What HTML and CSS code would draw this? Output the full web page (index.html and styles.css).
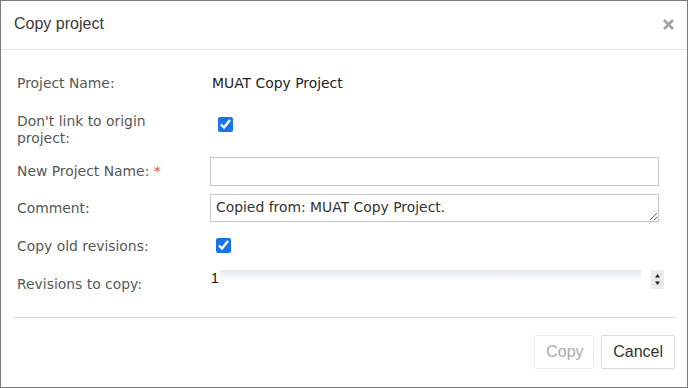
FILE: index.html
```html
<!DOCTYPE html>
<html>
<head>
<meta charset="utf-8">
<link rel="stylesheet" href="styles.css">
</head>
<body>
<div class="modal">
  <div class="modal-header">
    <span class="modal-title">Copy project</span>
    <span class="close" aria-label="Close">
      <svg width="11" height="11" viewBox="0 0 11 11"><path d="M1 1L10 10M10 1L1 10" stroke="#a2a2a2" stroke-width="2.6" stroke-linecap="butt"/></svg>
    </span>
  </div>
  <div class="modal-body">
    <div class="row r1">
      <div class="label">Project Name:</div>
      <div class="value">MUAT Copy Project</div>
    </div>
    <div class="row r2">
      <div class="label">Don't link to origin<br>project:</div>
      <div class="value"><input type="checkbox" class="check c1" checked></div>
    </div>
    <div class="row r3">
      <div class="label">New Project Name: <span class="req">*</span></div>
      <div class="value"><input type="text" class="text-input"></div>
    </div>
    <div class="row r4">
      <div class="label">Comment:</div>
      <div class="value"><textarea class="text-area">Copied from: MUAT Copy Project.</textarea></div>
    </div>
    <div class="row r5">
      <div class="label">Copy old revisions:</div>
      <div class="value"><input type="checkbox" class="check c2" checked></div>
    </div>
    <div class="row r6">
      <div class="label">Revisions to copy:</div>
      <div class="value">
        <div class="num-field">
          <span class="num">1</span>
          <span class="track"></span>
          <span class="spinner">
            <svg width="13" height="19" viewBox="0 0 13 19"><path d="M6.5 4L9 7.5H4z" fill="#222"/><path d="M6.5 15L9 11.5H4z" fill="#222"/></svg>
          </span>
        </div>
      </div>
    </div>
  </div>
  <div class="modal-footer">
    <button class="btn btn-disabled" disabled>Copy</button>
    <button class="btn">Cancel</button>
  </div>
</div>
</body>
</html>
```

FILE: styles.css
```css
html, body {
  margin: 0;
  padding: 0;
  background: #fff;
}

.modal {
  width: 686px;
  height: 386px;
  border: 1px solid #7b7b7b;
  display: flex;
  flex-direction: column;
  background: #fff;
}

.modal-header {
  border-bottom: 1px solid #e5e5e5;
  display: flex;
  align-items: center;
  justify-content: space-between;
  padding: 0 13px 3px 13px;
  box-sizing: content-box;
  height: 45px;
}

.modal-title {
  font-family: "Liberation Sans", Arial, sans-serif;
  font-size: 16px;
  color: #3a3a3a;
  line-height: 18px;
}

.close {
  display: flex;
  width: 11px;
  height: 11px;
  margin-top: 2px;
}

.modal-body {
  flex: 1;
  padding: 23px 28px 0 16px;
  display: flex;
  flex-direction: column;
  font-family: "DejaVu Sans", Verdana, sans-serif;
  font-size: 13.9px;
  line-height: 17px;
}

.row {
  display: grid;
  grid-template-columns: 193px 1fr;
  align-items: center;
}

.label {
  color: #575757;
}

.value {
  color: #222;
  display: flex;
  align-items: center;
}

.r1 { height: 20px; }
.r1 .value { padding-left: 2px; }

.r2 { margin-top: 18px; height: 34px; }
.r2 .label { padding-top: 2px; }
.r2 .value { align-self: start; padding-top: 6px; }

.r3 { margin-top: 12px; }
.r4 { margin-top: 8px; }
.r5 { margin-top: 14px; height: 18px; }
.r5 .label { padding-top: 2px; }
.r6 { margin-top: 16px; align-items: start; }
.r6 .label { padding-top: 6px; }

.req {
  color: #d9534f;
}

.check {
  width: 15px;
  height: 15px;
  margin: 0;
  accent-color: #1a73e8;
}
.c1 { margin-left: 8px; }
.c2 { margin-left: 6px; }

.text-input {
  width: 100%;
  height: 29px;
  box-sizing: border-box;
  border: 1px solid #c8c8c8;
  border-radius: 0;
  margin: 0;
  padding: 4px 5px;
  font: inherit;
  outline: none;
}

.text-area {
  width: 100%;
  height: 28px;
  box-sizing: border-box;
  border: 1px solid #c8c8c8;
  border-radius: 0;
  margin: 0;
  padding: 4px 5px;
  font: inherit;
  color: #333;
  resize: vertical;
  overflow: hidden;
  outline: none;
}

.num-field {
  width: 100%;
  height: 19px;
  display: flex;
  align-items: stretch;
}

.num {
  font-family: "Liberation Sans", Arial, sans-serif;
  font-size: 14px;
  line-height: 16px;
  color: #111;
  padding-left: 1px;
  width: 9px;
}

.track {
  flex: 1;
  background: linear-gradient(#e2e8ef 0px, #eef2f6 4px, #fff 11px);
  margin-right: 10px;
}

.spinner {
  width: 13px;
  height: 19px;
  background: #ebebeb;
  display: flex;
  margin-right: -5px;
}

.modal-footer {
  height: 70px;
  box-sizing: border-box;
  margin: 0 10px 0 12px;
  border-top: 1px solid #dcdcdc;
  display: flex;
  justify-content: flex-end;
  align-items: flex-start;
  gap: 7px;
  padding: 17px 2px 0 0;
}

.btn {
  height: 34px;
  padding: 0 11px;
  font-family: "Liberation Sans", Arial, sans-serif;
  font-size: 16px;
  color: #333;
  background: #fff;
  border: 1px solid #ddd;
  border-radius: 2px;
  box-shadow: 0 1px 1px rgba(0,0,0,0.04);
  margin: 0;
}

.btn-disabled {
  color: #ababab;
  border-color: #ececec;
  box-shadow: none;
  width: 60px;
}
```
